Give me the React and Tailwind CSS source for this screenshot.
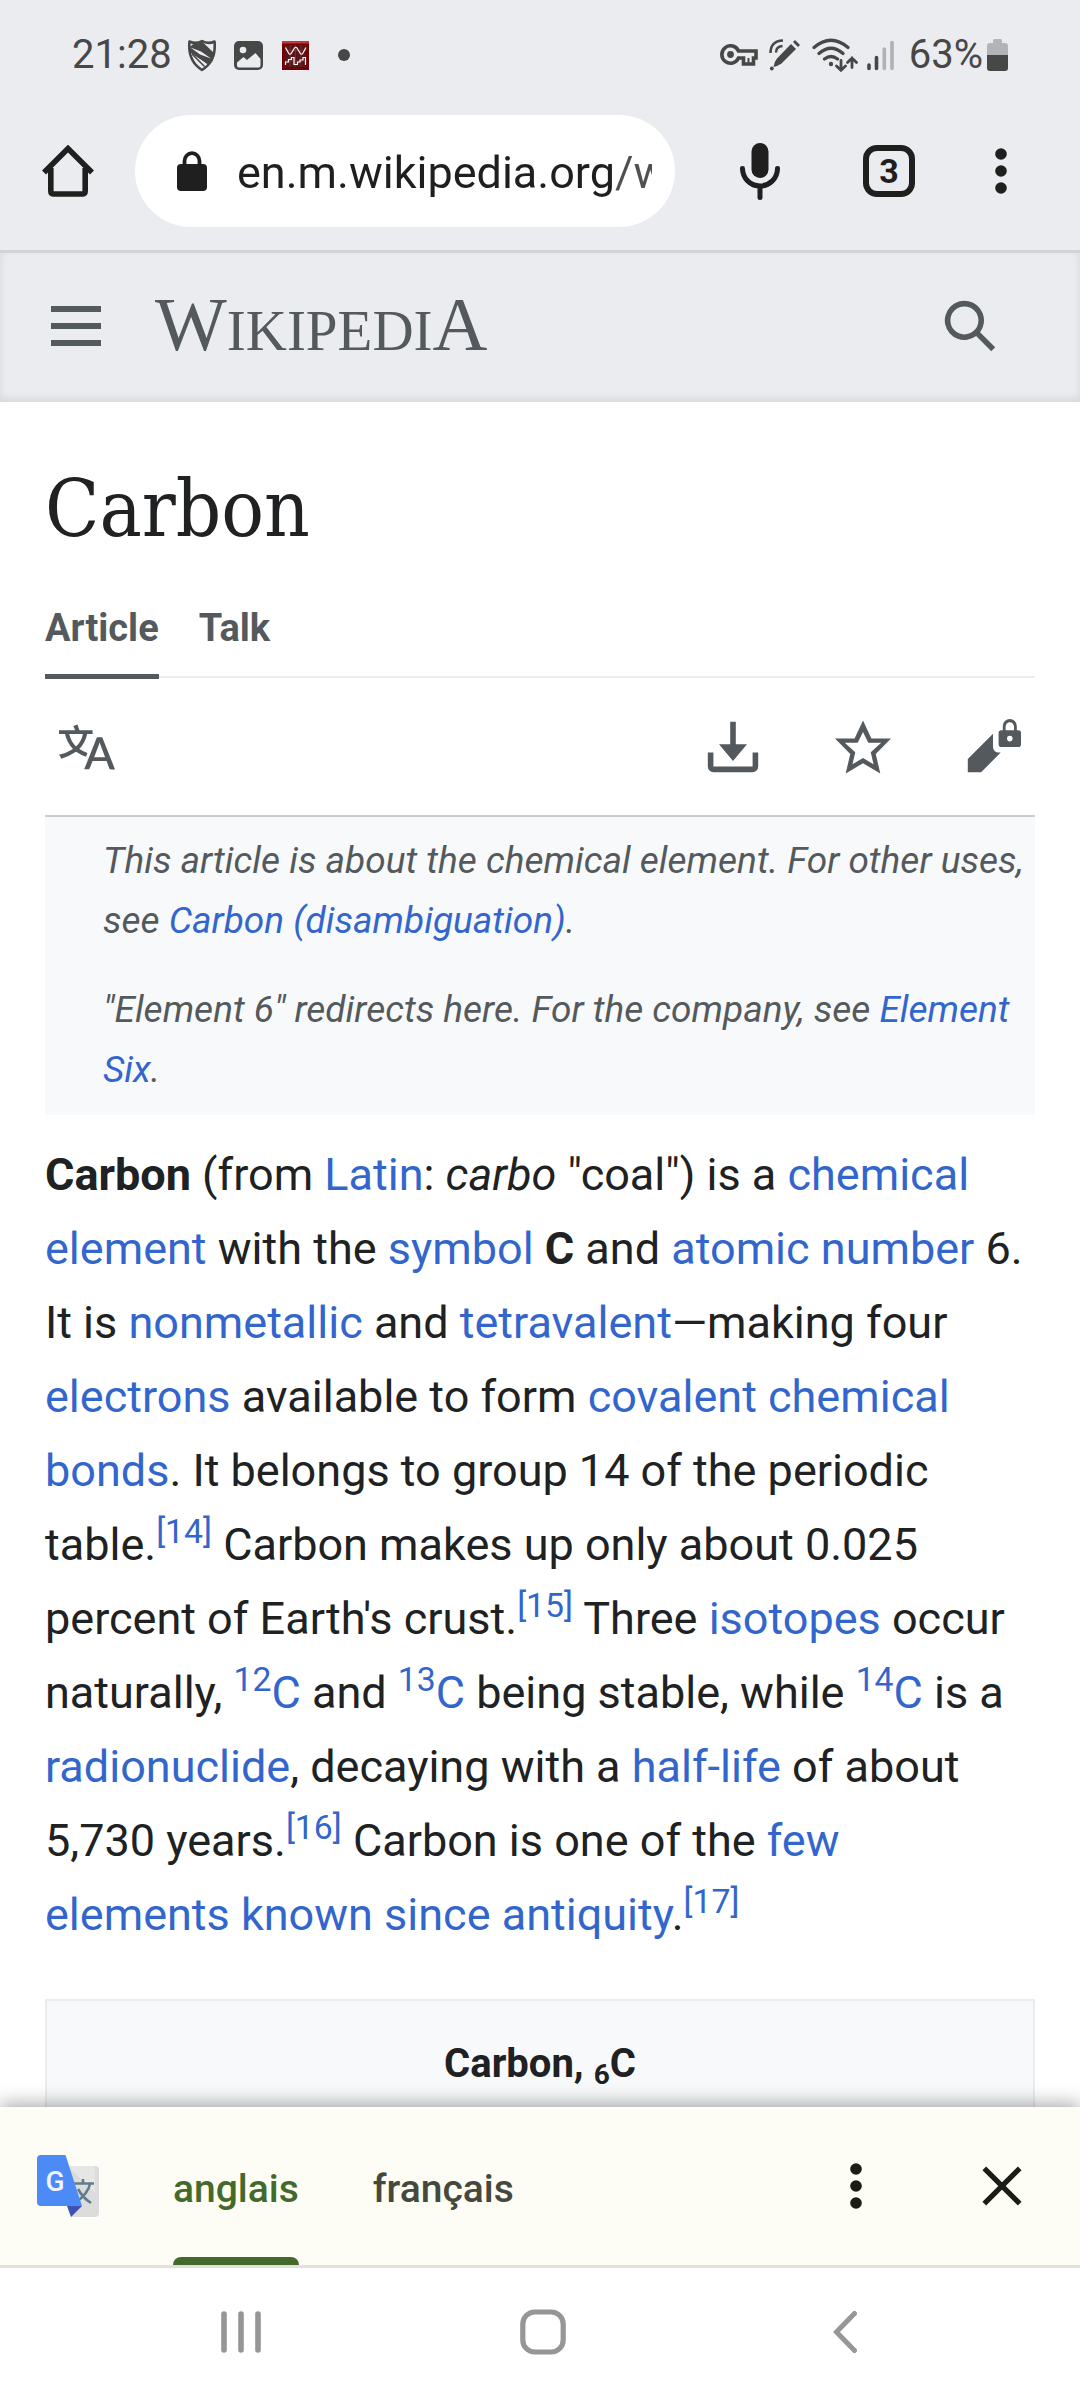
import React from "react";

const linkClass = "text-[#3366cc]";

function A({ children }) {
  return (
    <a href="#" className={linkClass}>
      {children}
    </a>
  );
}

function Ref({ n }) {
  return (
    <sup>
      <a href="#" className={linkClass}>[{n}]</a>
    </sup>
  );
}

function Isotope({ mass }) {
  return (
    <a href="#" className={linkClass}>
      <sup>{mass}</sup>C
    </a>
  );
}

function Glyph({ d, label }) {
  return (
    <button type="button" aria-label={label} className="text-[#54595d]">
      <svg viewBox="0 0 20 20" className="size-14" fill="currentColor" fillRule="evenodd">
        <path d={d} />
      </svg>
    </button>
  );
}

const LANGUAGE =
  "M20 18h-1.44a.61.61 0 0 1-.4-.12.8.8 0 0 1-.23-.31L17 15h-5l-1 2.54a.8.8 0 0 1-.22.3.6.6 0 0 1-.4.14H9l4.55-11.47h1.89zm-3.53-4.31L14.89 9.5a12 12 0 0 1-.39-1.24q-.09.37-.19.69l-.19.56-1.58 4.19zm-6.3-1.58a13.4 13.4 0 0 1-2.91-1.41 11.46 11.46 0 0 0 2.81-5.37H12V4H7.31a4 4 0 0 0-.2-.56C6.87 2.79 6.6 2 6.6 2l-1.47.5s.4.89.6 1.5H0v1.33h2.15A11.23 11.23 0 0 0 5 10.7a17.2 17.2 0 0 1-5 2.1q.56.82.87 1.38a23.3 23.3 0 0 0 5.22-2.51 15.6 15.6 0 0 0 3.56 1.77zM3.63 5.33h4.91a8.1 8.1 0 0 1-2.45 4.45 9.1 9.1 0 0 1-2.46-4.45";
const DOWNLOAD = "M17 12v5H3v-5H1v5a2 2 0 0 0 2 2h14a2 2 0 0 0 2-2v-5zM10 15l5-6h-4V1H9v8H5z";
const STAR =
  "M20 7h-7L10 .5 7 7H0l5.46 5.47-1.64 7 6.18-3.7 6.18 3.73-1.63-7zm-10 6.9-3.76 2.27 1-4.28L3.5 8.5h4.61L10 4.6l1.9 3.9h4.6l-3.73 3.4 1 4.28z";
const EDIT_LOCK =
  "M12 12a2 2 0 0 1-2-2V5.25l-9 9V19h4.75l7-7zm7-8h-.5V2.5a2.5 2.5 0 0 0-5 0V4H13a1 1 0 0 0-1 1v4a1 1 0 0 0 1 1h6a1 1 0 0 0 1-1V5a1 1 0 0 0-1-1zm-3 4a1 1 0 1 1 0-2 1 1 0 0 1 0 2zm1.5-4h-3V2.75C14.5 1.9 15.17 1.2 16 1.2s1.5.7 1.5 1.55z";
const SEARCH = "M12.2 13.6a7 7 0 1 1 1.4-1.4l5.4 5.4-1.4 1.4zM3 8a5 5 0 1 0 10 0A5 5 0 0 0 3 8";

function Dots({ label, className }) {
  return (
    <button type="button" aria-label={label} className={className}>
      <svg viewBox="0 0 12 46" className="mx-auto h-[46px] w-3" fill="currentColor">
        <circle cx="6" cy="6" r="5.8" />
        <circle cx="6" cy="23" r="5.8" />
        <circle cx="6" cy="40" r="5.8" />
      </svg>
    </button>
  );
}

function StatusBar() {
  return (
    <div className="flex h-[92px] items-center pt-[18px] pr-[72px] pl-[72px] text-[40px] leading-[48px] text-[#474747]">
      <span>21:28</span>
      <svg viewBox="0 0 30 33" className="ml-[15px] h-[33px] w-[30px]" fill="none" stroke="currentColor">
        <path d="M2.5 2.5Q9 5.5 15 2Q21 5.500 27.500 2.500Q29.500 22 15 31Q.5 22 2.500 2.500Z" strokeWidth="2.6" strokeLinejoin="round" />
        <path d="M6.500 5Q11 5 15 2.500L28 15L25 23L20 25L2.500 13V8Z" fill="currentColor" stroke="none" />
        <path d="M3.500 8.500L14 12.500L24 19.500L13 15.500Z" fill="#ebecf0" stroke="none" />
        <path d="M4 14.500L17 23L20 25.500L15 29L9 24Z" fill="#ebecf0" stroke="none" />
        <path d="M5 15L17.500 27.500" strokeWidth="1.600" />
      </svg>
      <svg viewBox="0 0 29 29" className="ml-[17px] size-[29px]">
        <rect width="29" height="29" rx="5" fill="#474747" />
        <circle cx="9" cy="9" r="3.300" fill="#ebecf0" />
        <path d="M3 21.500L9.500 16L13 19L21.500 12L26.500 18V24.500Q26.500 26.500 24.500 26.500H5Q3 26.500 3 24.500Z" fill="#ebecf0" />
      </svg>
      <svg viewBox="0 0 27 29" className="ml-[19px] h-[29px] w-[27px]" fill="none">
        <rect width="27" height="29" fill="#6d0306" />
        <rect width="27" height="2.500" fill="#c03a3a" />
        <rect x="3" y="4" width="21" height="22" fill="#5a1416" />
        <path d="M8 4V26M13.500 4V26M19 4V26M3 9.500H24M3 20H24" stroke="#7d3a3c" strokeWidth=".7" />
        <path d="M3.500 6.500L6.500 12Q8 14.500 9.500 12L12.500 7Q13.500 5.500 15 7L18 12Q19.500 14.500 21 12L24 6.500" stroke="#fff" strokeWidth="1.200" />
        <path d="M3.500 24V21H6.500V18.500H9.500V16.500H12V23.500H15.500V21H18V19H21V16.500H23.500V24" stroke="#fff" strokeWidth="1.200" />
      </svg>
      <svg viewBox="0 0 12 12" className="ml-[29px] size-3" fill="currentColor">
        <circle cx="6" cy="6" r="6" />
      </svg>
      <svg viewBox="0 0 38 22" className="ml-auto h-[22px] w-[38px]" fill="none" stroke="currentColor">
        <path d="M18.500 7H36V14H33.500V20H23.500V14H18.500A8.700 8.700 0 1 1 18.500 7Z" strokeWidth="3.600" />
        <circle cx="10.500" cy="10.500" r="3.400" fill="currentColor" stroke="none" />
        <path d="M28.500 14V19" strokeWidth="2" />
      </svg>
      <svg viewBox="0 0 31 32" className="ml-[11px] h-8 w-[31px]" fill="currentColor">
        <path d="M22 5L27 10L12.500 24.500Q8 27.500 4.500 28Q5 23 8 19.500Z" />
        <path d="M24 3L26 1L31 6L29 8Z" />
        <circle cx="2.800" cy="29.500" r="1.900" />
        <path d="M1.500 14Q1.500 2 14 1.500M7 13.500Q7 7.500 13.500 7" fill="none" stroke="currentColor" strokeWidth="2.500" />
      </svg>
      <svg viewBox="0 0 46 34" className="ml-3 h-[34px] w-[46px]" fill="none" stroke="currentColor" strokeLinecap="round">
        <path d="M2 9.500Q19 -5 36 9.500M7 15.500Q19 5 31 15.500M12.500 21Q19 16 25.500 21" strokeWidth="3.200" />
        <circle cx="19" cy="26" r="2.200" fill="currentColor" stroke="none" />
        <path d="M29 22.500V32M24.500 28L29 32.300L33.500 28M40 29.500V20M35.500 24.500L40 20L44.500 24.500" strokeWidth="2.800" />
      </svg>
      <svg viewBox="0 0 27 31" className="ml-[9px] h-[31px] w-[27px]" stroke="#474747" strokeWidth="3.600" strokeLinecap="round">
        <path d="M2 25V28.500M9.500 17.500V28.500" />
        <path d="M17.300 9V28.500M25 2.500V28.500" stroke="#b0b1b5" />
      </svg>
      <span className="ml-[15px]">63%</span>
      <svg viewBox="0 0 21 32" className="ml-1 h-8 w-[21px]">
        <path d="M6 1.500Q6 0 7.500 0H13.500Q15 0 15 1.500V4H18Q21 4 21 7V16H0V7Q0 4 3 4H6Z" fill="#b3b4b8" />
        <path d="M0 16H21V29Q21 32 18 32H3Q0 32 0 29Z" fill="#474747" />
      </svg>
    </div>
  );
}

function BrowserBar() {
  return (
    <div className="flex h-[158px] items-center pr-[51px] pl-[42px] text-[#1f1f1f]">
      <button type="button" aria-label="Home">
        <svg viewBox="0 0 52 52" className="size-[52px]" fill="none" stroke="currentColor" strokeWidth="5.600">
          <path d="M8.800 23V46Q8.800 49 11.800 49H40.200Q43.200 49 43.200 46V23" />
          <path d="M2 27.500L26 3.600L50 27.500" strokeLinejoin="miter" />
        </svg>
      </button>
      <div className="ml-[41px] flex h-28 min-w-0 flex-1 items-center rounded-full bg-white pr-[23px] pl-[42px]">
        <svg viewBox="0 0 30 40" className="h-10 w-[30px] shrink-0" fill="currentColor">
          <rect y="13" width="30" height="27" rx="4" />
          <path d="M7.500 15V10A7.500 7.800 0 0 1 22.500 10V15" fill="none" stroke="currentColor" strokeWidth="3.800" />
        </svg>
        <input
          type="text"
          aria-label="Address"
          readOnly
          defaultValue="en.m.wikipedia.org/wiki/Carbon"
          className="ml-[30px] h-17 w-full min-w-0 bg-[linear-gradient(90deg,#1f1f1f_377px,#505050_378px)] bg-clip-text pt-0.5 text-[45px] leading-[64px] text-transparent outline-none"
        />
      </div>
      <button type="button" aria-label="Voice search" className="ml-[57px] w-14">
        <svg viewBox="0 0 40 57" className="mx-auto h-[57px] w-10" fill="none" stroke="currentColor" strokeWidth="5">
          <rect x="11.500" width="17" height="35" rx="8.500" fill="currentColor" stroke="none" />
          <path d="M2.500 25.500A17.500 17.500 0 0 0 37.500 25.500M20 43V54.500" strokeLinecap="round" />
        </svg>
      </button>
      <button
        type="button"
        aria-label="Open tabs"
        className="mr-[58px] ml-[75px] flex size-[52px] items-center justify-center rounded-[14px] border-[6px] border-current text-[34px] leading-8 font-bold"
      >
        3
      </button>
      <Dots label="Browser menu" className="w-14" />
    </div>
  );
}

function SiteHeader() {
  return (
    <header className="flex h-[149px] items-center pr-[82px] pb-[3px] pl-[51px] shadow-[inset_0_-3px_9px_rgba(0,0,0,0.09)]">
      <button type="button" aria-label="Main menu" className="flex w-[50px] flex-col gap-[11px]">
        <span className="h-1.5 w-full bg-[#54595d]" />
        <span className="h-1.5 w-full bg-[#54595d]" />
        <span className="h-1.5 w-full bg-[#54595d]" />
      </button>
      <a
        href="#"
        aria-label="Wikipedia"
        className="ml-[54px] pt-[3px] font-['Liberation_Serif',serif] text-[57px] leading-[72px] text-[#54595d]"
      >
        <span className="text-[76px]">W</span>IKIPEDI<span className="text-[76px]">A</span>
      </a>
      <div className="ml-auto flex">
        <Glyph d={SEARCH} label="Search" />
      </div>
    </header>
  );
}

function Article() {
  return (
    <main className="min-h-0 flex-1 overflow-hidden bg-white px-[45px] pt-[59px] text-[#202122]">
      <h1 className="font-['DejaVu_Serif_Condensed','DejaVu_Serif',serif] text-[79px] leading-[96px]">Carbon</h1>
      <nav className="mt-[47px] flex gap-10 border-b-2 border-[#eaecf0] text-[38px] leading-[48px] font-bold text-[#54595d]">
        <a href="#" className="-mb-[3px] border-b-[5px] border-[#54595d] pb-[22px]">Article</a>
        <a href="#">Talk</a>
      </nav>
      <div className="flex h-[139px] items-center gap-[74px] border-b-2 border-[#c8ccd1] px-3.5">
        <div className="mr-auto flex">
          <Glyph d={LANGUAGE} label="Language" />
        </div>
        <Glyph d={DOWNLOAD} label="Download" />
        <Glyph d={STAR} label="Watch" />
        <Glyph d={EDIT_LOCK} label="Edit" />
      </div>
      <div className="flex flex-col gap-[29px] bg-[#f8f9fa] pt-3.5 pb-[15px] pl-[58px] text-[37px] leading-[60px] text-[#54595d] italic">
        <p>
          This article is about the chemical element. For other uses, see <A>Carbon (disambiguation)</A>.
        </p>
        <p>
          "Element 6" redirects here. For the company, see <A>Element Six</A>.
        </p>
      </div>
      <p className="mt-[23px] text-[45px] leading-[74px]">
        <b>Carbon</b> (from <A>Latin</A>: <i>carbo</i> "coal") is a <A>chemical element</A> with the{" "}
        <A>symbol</A> <b>C</b> and <A>atomic number</A> 6. It is <A>nonmetallic</A> and{" "}
        <A>tetravalent</A>—making four <A>electrons</A> available to form{" "}
        <A>covalent chemical bonds</A>. It belongs to group 14 of the periodic table.
        <Ref n={14} /> Carbon makes up only about 0.025 percent of Earth's crust.
        <Ref n={15} /> Three <A>isotopes</A> occur naturally, <Isotope mass={12} /> and{" "}
        <Isotope mass={13} /> being stable, while <Isotope mass={14} /> is a <A>radionuclide</A>,
        decaying with a <A>half-life</A> of about 5,730 years.
        <Ref n={16} /> Carbon is one of the <A>few elements known since antiquity</A>.<Ref n={17} />
      </p>
      <table className="mt-[47px] w-full border-separate border-spacing-0 border-2 border-[#eaecf0] bg-[#f8f9fa]">
        <tbody>
          <tr>
            <th className="pt-[30px] pb-8 text-center text-[40px] leading-[66px] font-bold">
              Carbon, <sub className="text-[28px]">6</sub>C
            </th>
          </tr>
        </tbody>
      </table>
    </main>
  );
}

function TranslateLogo() {
  return (
    <svg viewBox="0 0 62 62" className="size-[62px]">
      <path d="M20 11H58Q62 11 62 15V58Q62 62 58 62H34Z" fill="#dcdcdc" />
      <path d="M31 11L58 38V15Q58 11 54 11Z" fill="#e6e6e6" />
      <g fill="none" stroke="#607d8b" strokeWidth="2.600">
        <path d="M37 28.500H57M46 24V28.500M53 29Q51 39 38 48M41 34Q46 43 54 48" />
      </g>
      <path d="M30 51H45L34 62Z" fill="#3f51b5" />
      <path d="M4 0H28.500L45 51H4Q0 51 0 47V4Q0 0 4 0Z" fill="#4c8bf5" />
      <text x="18" y="36" textAnchor="middle" fontSize="28" fontWeight="500" fill="#f1f5ff" fontFamily="Roboto, sans-serif">
        G
      </text>
    </svg>
  );
}

function TranslateBar() {
  return (
    <div className="relative flex h-[161px] items-center border-b-[3px] border-[#e0e1dd] bg-[#fdfdf5] pr-[58px] pl-[37px] shadow-[0_-3px_18px_rgba(0,0,0,0.35)]">
      <TranslateLogo />
      <div className="ml-[74px] flex gap-[74px] self-stretch text-[39px] leading-[48px] font-medium">
        <button type="button" className="relative pt-1.5 text-[#446a2b]">
          anglais
          <span className="absolute inset-x-0 bottom-0 h-2 rounded-t-lg bg-[#446a2b]" />
        </button>
        <button type="button" className="pt-1.5 text-[#44483d]">français</button>
      </div>
      <Dots label="Translation options" className="ml-auto w-10 text-[#1a1c16]" />
      <button type="button" aria-label="Close" className="ml-[106px] text-[#1a1c16]">
        <svg viewBox="0 0 40 40" className="size-10" stroke="currentColor" strokeWidth="5.200">
          <path d="M2.300 2.300L37.700 37.700M37.700 2.300L2.300 37.700" />
        </svg>
      </button>
    </div>
  );
}

function NavigationBar() {
  return (
    <nav className="relative grid h-[132px] grid-cols-3 items-center bg-white pr-[84px] pb-1 pl-[90px] text-[#969696]">
      <button type="button" aria-label="Recent apps">
        <svg viewBox="0 0 40 44" className="mx-auto h-11 w-10" fill="none" stroke="currentColor" strokeWidth="5.600" strokeLinecap="round">
          <path d="M3 4V40M20 4V40M37 4V40" />
        </svg>
      </button>
      <button type="button" aria-label="Home screen">
        <svg viewBox="0 0 46 46" className="mx-auto size-[46px]" fill="none" stroke="currentColor" strokeWidth="5.200">
          <rect x="2.800" y="3" width="40.400" height="40" rx="12" />
        </svg>
      </button>
      <button type="button" aria-label="Back">
        <svg viewBox="0 0 24 44" className="mx-auto h-11 w-6" fill="none" stroke="currentColor" strokeWidth="5" strokeLinecap="round">
          <path d="M21.500 3.500L3.500 22L21.500 40.500" />
        </svg>
      </button>
    </nav>
  );
}

export default function App() {
  return (
    <div className="flex h-screen flex-col overflow-hidden bg-[#ebecf0] font-[Roboto,sans-serif]">
      <div className="border-b-[3px] border-[#d3d4d8]">
        <StatusBar />
        <BrowserBar />
      </div>
      <SiteHeader />
      <Article />
      <TranslateBar />
      <NavigationBar />
    </div>
  );
}
